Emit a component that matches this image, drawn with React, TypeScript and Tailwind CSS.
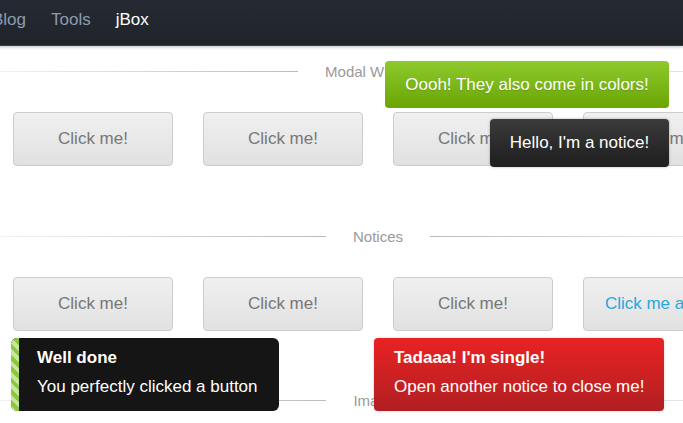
import React from "react";

function Btn({ label, blue }: { label: string; blue?: boolean }) {
  return (
    <div
      className={`w-[160px] h-[54px] shrink-0 rounded-[4px] border border-[#cccccc] bg-gradient-to-b from-[#f0f0f0] to-[#e1e1e1] flex items-center justify-center whitespace-nowrap text-[17px] ${
        blue ? "text-[#29a6dc]" : "text-[#777777]"
      }`}
    >
      {label}
    </div>
  );
}

function Header({ label }: { label: string }) {
  return (
    <div className="h-[20px] flex items-center">
      <div className="flex-1 h-px bg-gradient-to-r from-[#f2f2f2] to-[#bbbbbb]" />
      <div className="px-[27px] text-[15px] text-[#9a9a9a] leading-none whitespace-nowrap">{label}</div>
      <div className="flex-1 h-px bg-gradient-to-l from-[#f2f2f2] to-[#bbbbbb]" />
    </div>
  );
}

export default function App() {
  return (
    <div
      className="relative w-[683px] h-[423px] overflow-hidden bg-white"
      style={{ fontFamily: '"Liberation Sans", Arial, sans-serif' }}
    >
      <nav className="relative z-10 h-[46px] bg-gradient-to-b from-[#262b33] to-[#1f242b] border-b border-[#3a3f47] shadow-[0_1px_3px_rgba(0,0,0,0.25)] flex items-center gap-[25px] -ml-[8px] text-[17px] pb-[5px]">
        <span className="text-[#8c9bb0]">Blog</span>
        <span className="text-[#8c9bb0]">Tools</span>
        <span className="text-white">jBox</span>
      </nav>

      <div className="w-[756px]">
        <div className="mt-[15px]">
          <Header label="Modal Windows" />
        </div>
        <div className="mt-[31px] flex gap-[30px] px-[13px]">
          <Btn label="Click me!" />
          <Btn label="Click me!" />
          <Btn label="Click me!" />
          <Btn label="Click me!" />
        </div>
        <div className="mt-[60px]">
          <Header label="Notices" />
        </div>
        <div className="mt-[31px] flex gap-[30px] px-[13px]">
          <Btn label="Click me!" />
          <Btn label="Click me!" />
          <Btn label="Click me!" />
          <Btn label="Click me again!" blue />
        </div>
        <div className="mt-[59px]">
          <Header label="Images" />
        </div>
      </div>

      {/* Green tooltip */}
      <div className="absolute left-[385px] top-[61px] w-[284px] h-[47px] rounded-[4px] bg-gradient-to-b from-[#8fca2c] to-[#6aa500] flex items-center justify-center text-white text-[17px] whitespace-nowrap [text-shadow:0_1px_1px_rgba(0,0,0,0.15)]">
        Oooh! They also come in colors!
      </div>

      {/* Dark notice */}
      <div className="absolute left-[490px] top-[119px] w-[179px] h-[48px] rounded-[4px] bg-gradient-to-b from-[#3b3b3b] to-[#1e1e1e] flex items-center justify-center text-white text-[17px] whitespace-nowrap shadow-[0_0_3px_rgba(0,0,0,0.3)]">
        Hello, I'm a notice!
      </div>

      {/* Well done notice */}
      <div className="absolute left-[11px] top-[338px] w-[268px] h-[73px] rounded-[6px] bg-[#151515] overflow-hidden text-white pl-[26px] pt-[10px]">
        <div className="absolute left-0 top-0 bottom-0 w-[8px] bg-[repeating-linear-gradient(45deg,#c8e59c_0px,#c8e59c_4px,#8dc63f_4px,#8dc63f_8px)]" />
        <div className="text-[17px] font-bold leading-[20px]">Well done</div>
        <div className="text-[17px] leading-[20px] mt-[9px] whitespace-nowrap">You perfectly clicked a button</div>
      </div>

      {/* Red notice */}
      <div className="absolute left-[374px] top-[338px] w-[290px] h-[73px] rounded-[4px] bg-gradient-to-b from-[#e92222] to-[#b11f22] text-white pl-[20px] pt-[10px] shadow-[0_0_3px_rgba(0,0,0,0.2)]">
        <div className="text-[17px] font-bold leading-[20px]">Tadaaa! I'm single!</div>
        <div className="text-[17px] leading-[20px] mt-[9px] whitespace-nowrap">Open another notice to close me!</div>
      </div>
    </div>
  );
}
